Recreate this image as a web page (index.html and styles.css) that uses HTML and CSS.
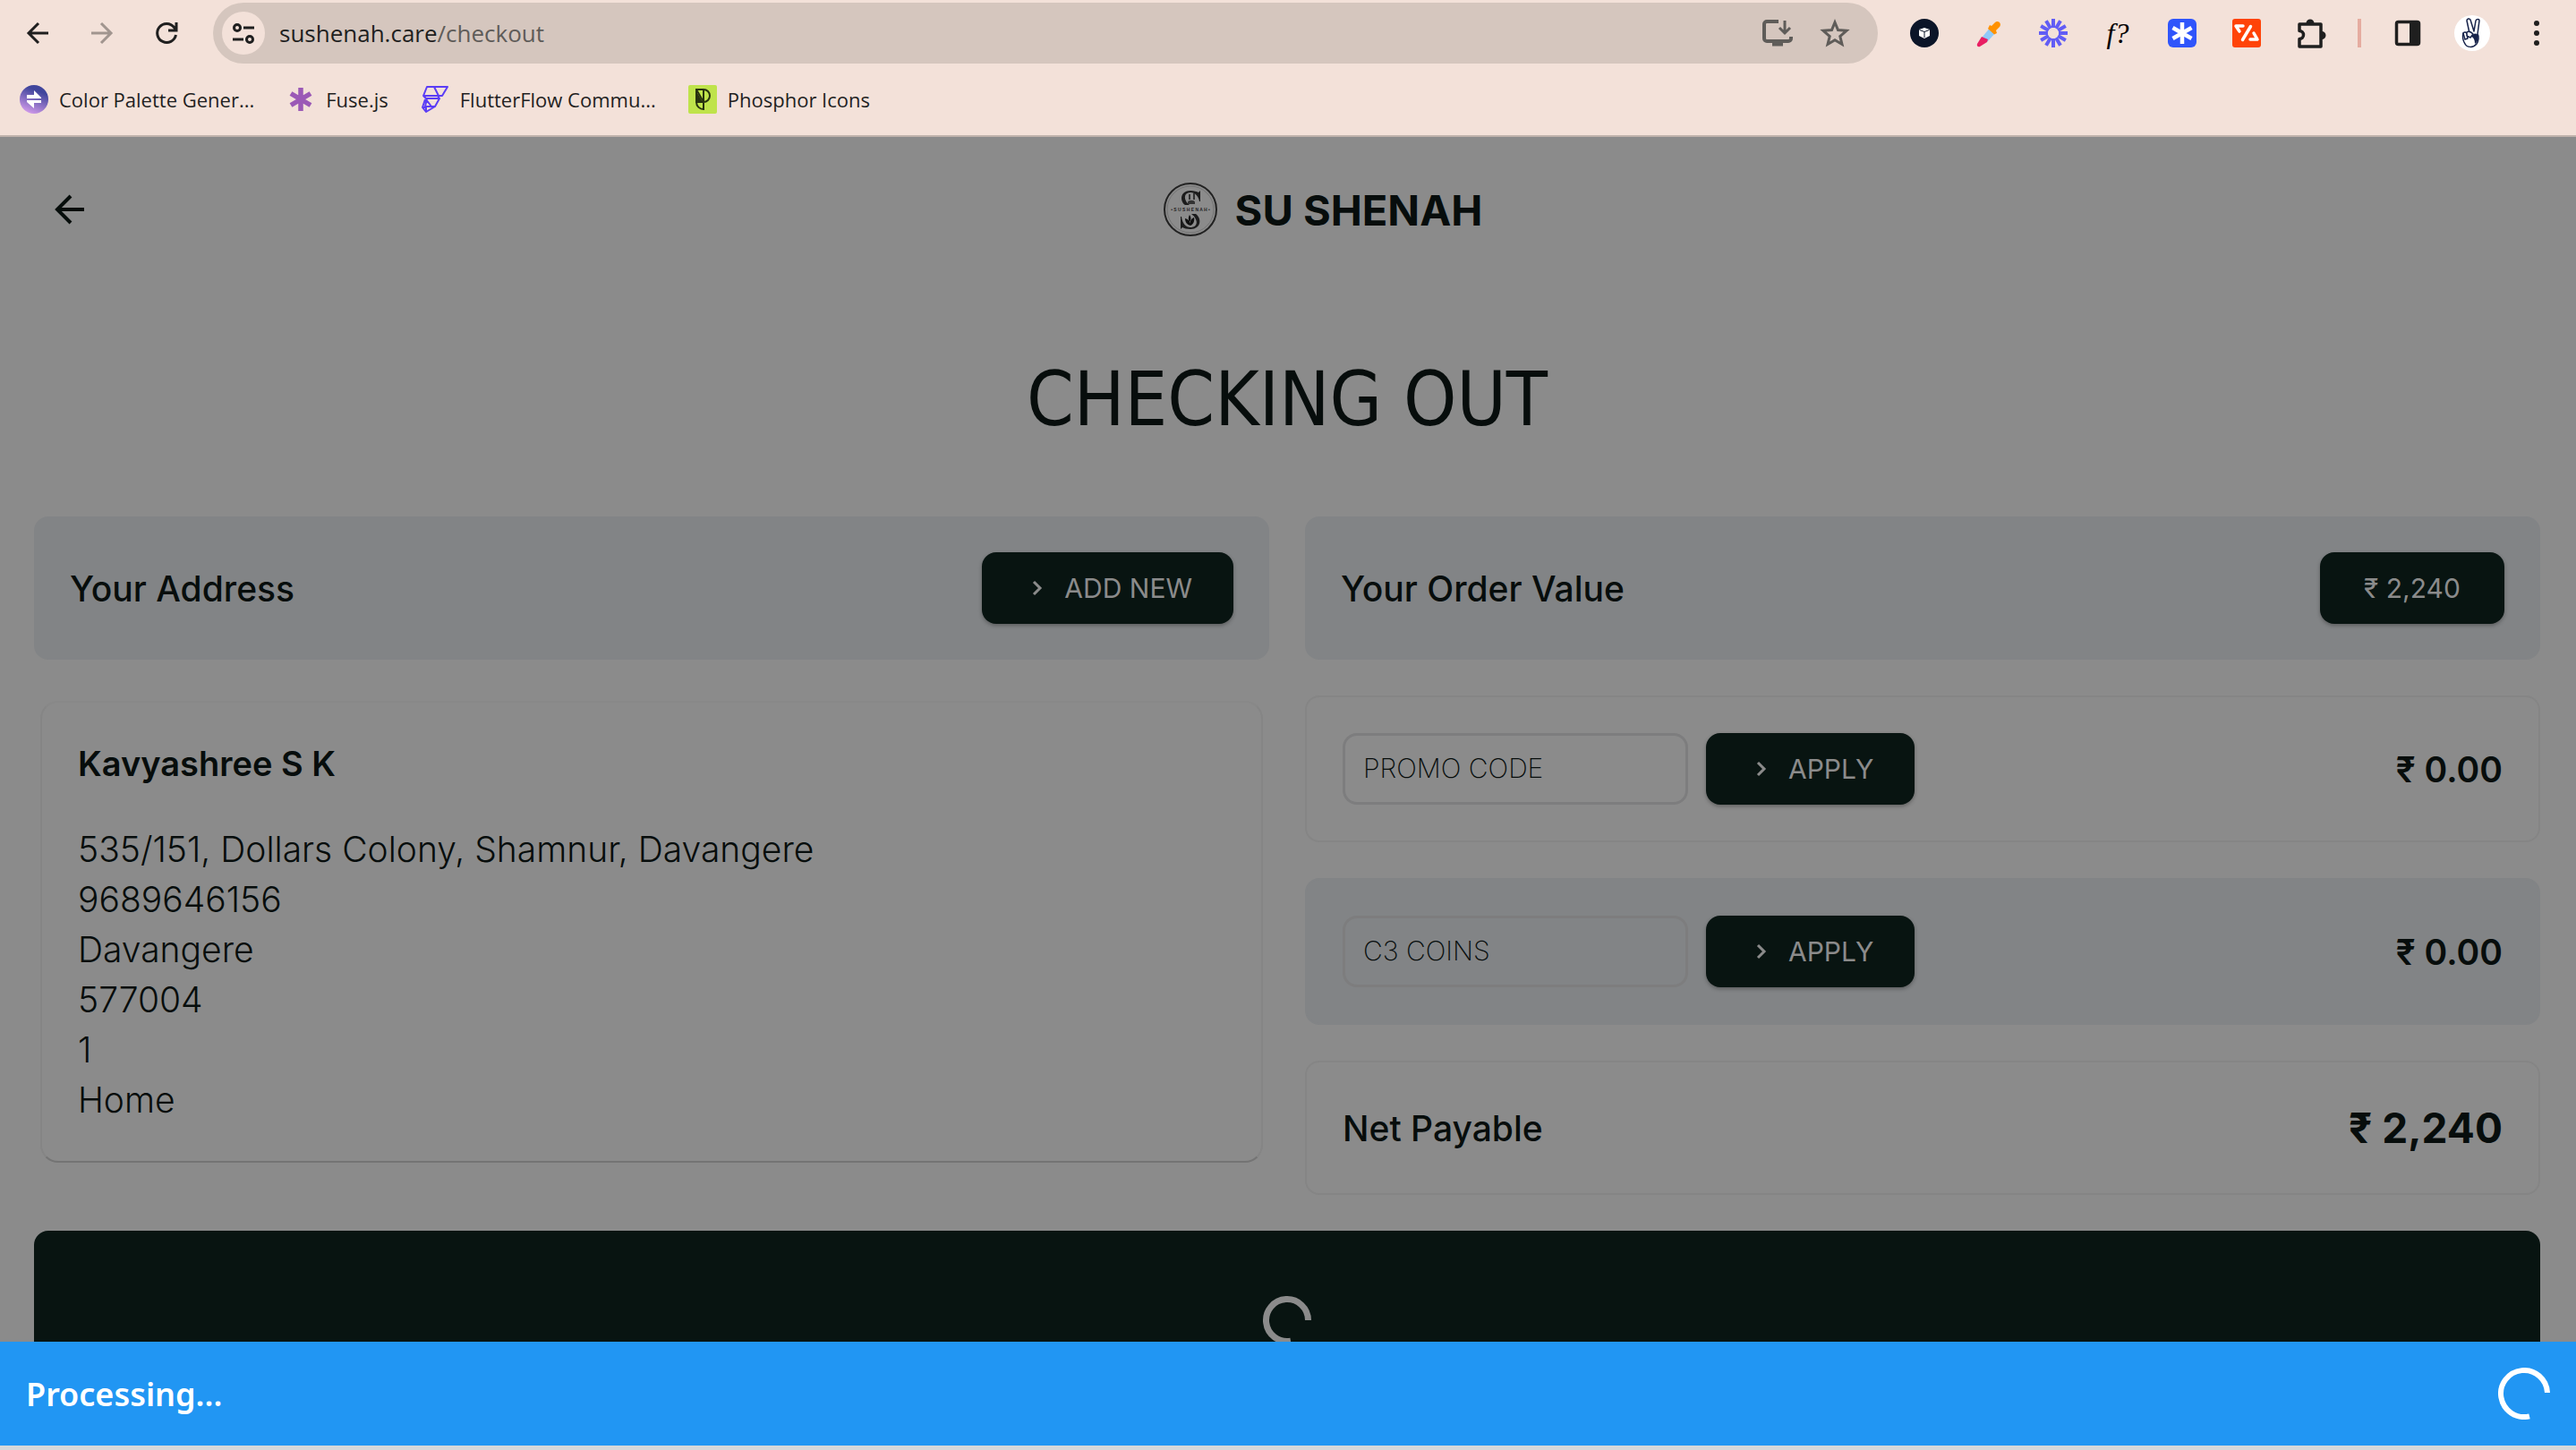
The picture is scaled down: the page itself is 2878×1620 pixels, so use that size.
FILE: index.html
```html
<!DOCTYPE html>
<html lang="en">
<head>
<meta charset="utf-8">
<meta name="viewport" content="width=device-width, initial-scale=1">
<title>Su Shenah - Checkout</title>
<link rel="stylesheet" href="styles.css">
</head>
<body>
<header class="browser">
  <div class="toolbar">
    <button class="tool" type="button" aria-label="Back"><svg width="32" height="32" viewBox="0 0 32 32" fill="none" stroke="#1f1f1f" stroke-width="3"><path d="M28 16H6M17 5 6 16l11 11"/></svg></button>
    <button class="tool" type="button" aria-label="Forward"><svg width="32" height="32" viewBox="0 0 32 32" fill="none" stroke="#a1958f" stroke-width="3"><path d="M4 16h22M15 5l11 11-11 11"/></svg></button>
    <button class="tool" type="button" aria-label="Reload"><svg width="32" height="32" viewBox="0 0 32 32" fill="none" stroke="#1f1f1f" stroke-width="3"><path d="M26.500 18A10.500 10.500 0 1 1 24.500 9.500L27 12.500M27 4v9h-9"/></svg></button>
    <div class="omnibox">
      <button class="site-info" type="button" aria-label="Site information"><svg width="28" height="28" viewBox="0 0 28 28" fill="none" stroke="#1f1f1f" stroke-width="3"><circle cx="7" cy="8" r="3.500"/><path d="M14 8h12M2 21h12"/><circle cx="21" cy="21" r="3.500"/></svg></button>
      <div class="url">sushenah.care<span class="url-path">/checkout</span></div>
      <button class="tool" type="button" aria-label="Install app"><svg width="36" height="36" viewBox="0 0 36 36" fill="none" stroke="#5f5c59" stroke-width="4"><path d="M19 5H6a3 3 0 0 0-3 3v16a3 3 0 0 0 3 3h24a3 3 0 0 0 3-3v-2"/><path d="M26 4v13M20 12l6 6 6-6" stroke-width="3"/><path d="M12 30h12" stroke-width="5"/></svg></button>
      <button class="tool" type="button" aria-label="Bookmark this page"><svg width="36" height="36" viewBox="0 0 36 36" fill="none" stroke="#5f5c59" stroke-width="3"><path d="m18 6 3.500 8.500 9.500.8-7.200 6.200 2.200 9L18 25.800 10 30.500l2.200-9L5 15.300l9.500-.8z"/></svg></button>
    </div>
    <button class="tool" type="button" aria-label="Package extension"><svg width="32" height="32" viewBox="0 0 32 32"><circle cx="16" cy="16" r="16" fill="#0b1528"/><path d="M16 10l6 2v7l-6 3-6-3v-7z" fill="#fff"/><path d="m10.500 12.500 5.500 2 5.500-2M16 14.500V21" stroke="#0b1528" fill="none"/></svg></button>
    <button class="tool" type="button" aria-label="Color picker"><svg width="32" height="32" viewBox="0 0 32 32"><path d="m18 9 6 6-10 11H8l1-6z" fill="#90caf9"/><path d="m8 20 7 3-1 3-8 5c-2 1-4-1-3-3z" fill="#e91e63"/><path d="m17 7 2 1 4-4c3-3 8 1 5 5l-4 4 1 3-3 1.500-7-6.500z" fill="#ff9100"/></svg></button>
    <button class="tool" type="button" aria-label="Loom"><svg width="32" height="32" viewBox="0 0 32 32" stroke="#625df5" stroke-width="4"><g id="ray"><path d="M16 0v10M16 22v10"/></g><use href="#ray" transform="rotate(30 16 16)"/><use href="#ray" transform="rotate(60 16 16)"/><use href="#ray" transform="rotate(90 16 16)"/><use href="#ray" transform="rotate(120 16 16)"/><use href="#ray" transform="rotate(150 16 16)"/></svg></button>
    <button class="tool fonts-ext" type="button" aria-label="Font finder">f?</button>
    <button class="tool" type="button" aria-label="Asterisk extension"><svg width="32" height="32" viewBox="0 0 32 32"><rect width="32" height="32" rx="6" fill="#2f55fb"/><path d="M16 4v24M5.500 10l21 12M26.500 10l-21 12" stroke="#fff" stroke-width="4.500"/></svg></button>
    <button class="tool" type="button" aria-label="Code extension"><svg width="32" height="32" viewBox="0 0 32 32"><rect width="32" height="32" rx="3" fill="#ff4308"/><path d="M12 8H4l4 6M20.500 8.500l-9 15M24 16l4 7h-8" fill="none" stroke="#fff" stroke-width="3.500" stroke-linecap="round" stroke-linejoin="round"/></svg></button>
    <button class="tool" type="button" aria-label="Extensions"><svg width="36" height="36" viewBox="0 0 36 36"><path d="M5 8h24v25H5v-8.500a4.500 4.500 0 0 0 0-9z" fill="none" stroke="#1f1f1f" stroke-width="3.500" stroke-linejoin="round"/><path d="M12.500 7a4.500 4.500 0 0 1 9 0zM30 16a4.500 4.500 0 0 1 0 9z" fill="#1f1f1f"/></svg></button>
    <span class="tool-divider"></span>
    <button class="tool" type="button" aria-label="Side panel"><svg width="32" height="32" viewBox="0 0 32 32"><rect x="3.500" y="3.500" width="25" height="25" rx="2" fill="none" stroke="#1f1f1f" stroke-width="3.500"/><path d="M18 3h10v26H18z" fill="#1f1f1f"/></svg></button>
    <button class="tool" type="button" aria-label="Profile"><svg width="40" height="40" viewBox="0 0 40 40"><circle cx="20" cy="20" r="20" fill="#fff"/><g fill="#fff" stroke="#17234a" stroke-width="1.500" stroke-linejoin="round"><path d="M17 20 14 6c0-2 3-3 4-1l4 13 2-12c1-2 4-2 4 0l-2 15c2 3 1 8-1 11-4 5-11 4-13 0-2-3-3-8-2-12z"/><path d="M10 20c1-2 4-1 4 1l1 5-3 1zM14 19c2-2 5 0 7 2l-3 4-4-2z"/></g><path d="M19 24c2-4 6-5 8-1 0 5-2 8-4 9 0-4-1-7-4-8z" fill="#17234a"/></svg></button>
    <button class="tool" type="button" aria-label="Browser menu"><svg width="32" height="32" viewBox="0 0 32 32" fill="#1f1f1f"><circle cx="16" cy="5" r="3"/><circle cx="16" cy="16" r="3"/><circle cx="16" cy="27" r="3"/></svg></button>
  </div>
  <nav class="bookmarks" aria-label="Bookmarks">
    <a class="bookmark" href="#"><svg width="32" height="32" viewBox="0 0 32 32"><defs><linearGradient id="palette" x1=".7" y1="0" x2=".3" y2="1"><stop offset=".2" stop-color="#40459c"/><stop offset="1" stop-color="#d49cec"/></linearGradient></defs><circle cx="16" cy="16" r="16" fill="url(#palette)"/><path d="M8 11h8V6l8 8v1H8zM24 20h-8v6l-8-7v-2h16z" fill="#fff"/></svg>Color Palette Gener...</a>
    <a class="bookmark" href="#"><svg width="32" height="32" viewBox="0 0 32 32" stroke="#9b59b6" stroke-width="5.500"><path d="M16 3v26M5 9.500l22 13M27 9.500l-22 13"/></svg>Fuse.js</a>
    <a class="bookmark" href="#"><svg width="32" height="32" viewBox="0 0 32 32" fill="none" stroke="#5b3df5" stroke-width="2" stroke-linejoin="round"><path d="M7 2h23l-6 10H3zM15 2l5 10M3 12l3 3h15l-5 9H5l2-9M21 15l-2-3M5 16l-3 9 4 5 10-6M6 16l6 8M2 25h4v5"/></svg>FlutterFlow Commu...</a>
    <a class="bookmark" href="#"><svg width="32" height="32" viewBox="0 0 32 32"><rect width="32" height="32" rx="2" fill="#bfe34b"/><path d="M9 5h8a7 7 0 0 1 0 14H9zM9 5l8 14v8c-4 0-8-3-8-8M17 5v14" fill="none" stroke="#28320f" stroke-width="2"/><path d="M9 7l7 12H9z" fill="#28320f"/></svg>Phosphor Icons</a>
  </nav>
</header>

<main class="page">
  <div class="site-header">
    <button class="back" type="button" aria-label="Go back"><svg width="40" height="40" viewBox="0 0 40 40" fill="none" stroke="#060d0b" stroke-width="4"><path d="M36 20H7M21 5 6 20l15 15"/></svg></button>
    <div class="brand">
      <svg width="60" height="60" viewBox="0 0 60 60" aria-hidden="true">
        <circle cx="30" cy="30" r="29" fill="none" stroke="#222" stroke-width="2"/>
        <circle cx="30" cy="30" r="26" fill="none" stroke="#747474"/>
        <path d="M24 25c-6-4-6-16 6-16 4 0 7 1 9 2l2-2v12h-1c-1-6-5-10-10-10-8 0-8 9-1 14z" fill="#1c1c1c"/>
        <path d="M28 13v6h2v-6zM33 12v7h2v-7zM27 22c0-3 8-3 8 0v2h-8z" fill="#333"/>
        <path d="M36 35c7 5 6 17-6 17-4 0-7-1-9-2l-2 2V38h1c1 8 5 12 10 12 9 0 9-9 1-15z" fill="#1c1c1c"/>
        <path d="M30 48c-4-1-6-4-6-8 4 1 6 4 6 8zM30 48c-1-5 1-8 4-9 1 4-1 8-4 9zM29 44c-2-3-1-6 0-8 2 3 2 5 0 8z" fill="#111"/>
        <text class="logo-name" x="30" y="32" text-anchor="middle">• S U S H E N A H •</text>
      </svg>
      <span class="brand-name">SU SHENAH</span>
    </div>
  </div>

  <h1 class="title">CHECKING OUT</h1>

  <div class="columns">
    <section class="column">
      <div class="heading-card">
        <h2 class="label">Your Address</h2>
        <button class="btn" type="button"><svg width="32" height="32" viewBox="0 0 32 32" fill="none" stroke="#8b8b8b" stroke-width="3"><path d="m12 9 7 7-7 7"/></svg>ADD NEW</button>
      </div>
      <article class="address">
        <h3 class="address-name">Kavyashree S K</h3>
        <div>535/151, Dollars Colony, Shamnur, Davangere</div>
        <div>9689646156</div>
        <div>Davangere</div>
        <div>577004</div>
        <div>1</div>
        <div>Home</div>
      </article>
    </section>

    <section class="column">
      <div class="heading-card">
        <h2 class="label">Your Order Value</h2>
        <button class="btn" type="button">₹ 2,240</button>
      </div>
      <form class="row">
        <input class="field" type="text" placeholder="PROMO CODE" aria-label="Promo code">
        <button class="btn" type="button"><svg width="32" height="32" viewBox="0 0 32 32" fill="none" stroke="#8b8b8b" stroke-width="3"><path d="m12 9 7 7-7 7"/></svg>APPLY</button>
        <span class="amount">₹ 0.00</span>
      </form>
      <form class="row row-tinted">
        <input class="field" type="text" placeholder="C3 COINS" aria-label="C3 coins">
        <button class="btn" type="button"><svg width="32" height="32" viewBox="0 0 32 32" fill="none" stroke="#8b8b8b" stroke-width="3"><path d="m12 9 7 7-7 7"/></svg>APPLY</button>
        <span class="amount">₹ 0.00</span>
      </form>
      <div class="row">
        <h2 class="label">Net Payable</h2>
        <span class="amount total">₹ 2,240</span>
      </div>
    </section>
  </div>

  <button class="pay" type="button" aria-label="Pay now"><svg width="56" height="56" viewBox="0 0 56 56" fill="none" stroke="#8b8b8b" stroke-width="7"><path d="M32 51.200A23.500 23.500 0 1 1 51.500 28"/></svg></button>
</main>

<div class="snackbar" role="status">
  <span>Processing...</span>
  <svg width="58" height="58" viewBox="0 0 58 58" fill="none" stroke="#fff" stroke-width="6"><path d="M35 54.300A26 26 0 1 1 55 28"/></svg>
</div>
</body>
</html>
```
FILE: styles.css
```css
:root {
  --surface: #8b8b8b;
  --tint: #828486;
  --ink: #070d0c;
  --dark: #081411;
  --edge: #858585;
}

* {
  box-sizing: border-box;
}

body {
  margin: 0;
  height: 100vh;
  display: flex;
  flex-direction: column;
  overflow: hidden;
  background: var(--surface);
  color: var(--ink);
  font-family: Inter, "Noto Sans", sans-serif;
}

button {
  border: 0;
  padding: 0;
  background: none;
  font: inherit;
  color: inherit;
}

h1, h2, h3 {
  margin: 0;
}

svg {
  display: block;
  flex: none;
}

/* Browser chrome */
.browser {
  flex: none;
  background: #f3e1d9;
  border-bottom: 2px solid #bfb2ab;
  font-family: "Open Sans", "Noto Sans", sans-serif;
  color: #1f1f1f;
}

.toolbar {
  display: flex;
  align-items: center;
  gap: 24px;
  height: 74px;
  padding: 0 20px 0 18px;
}

.tool {
  display: flex;
  flex: none;
  align-items: center;
  justify-content: center;
  width: 48px;
  height: 48px;
}

.fonts-ext {
  font: italic 32px "Liberation Serif", serif;
  color: #000;
}

.tool-divider {
  width: 4px;
  height: 32px;
  margin: 0 4px;
  background: #e5aca0;
}

.omnibox {
  flex: 1;
  display: flex;
  align-items: center;
  gap: 16px;
  height: 68px;
  margin: 0 4px;
  padding: 0 24px 0 10px;
  border-radius: 34px;
  background: #d5c6be;
}

.site-info {
  display: grid;
  place-items: center;
  width: 48px;
  height: 48px;
  border-radius: 50%;
  background: #f3e1d9;
}

.url {
  flex: 1;
  font-size: 26px;
}

.url-path {
  color: #5f5c59;
}

.bookmarks {
  display: flex;
  gap: 36px;
  height: 77px;
  padding: 0 22px 4px;
}

.bookmark {
  display: flex;
  align-items: center;
  gap: 12px;
  font-size: 22px;
  color: inherit;
  text-decoration: none;
}

/* Checkout page */
.page {
  flex: 1;
  min-height: 0;
  overflow: hidden;
  padding: 0 40px 0 38px;
}

.site-header {
  display: flex;
  align-items: center;
  height: 162px;
}

.back {
  display: grid;
  place-items: center;
  width: 80px;
  height: 80px;
}

.brand {
  flex: 1;
  display: flex;
  align-items: center;
  justify-content: center;
  gap: 20px;
}

.brand-name {
  font-size: 47px;
  font-weight: 700;
}

.logo-name {
  font: 700 5px "Liberation Sans", sans-serif;
  fill: #222;
}

.title {
  padding: 71px 0;
  font: 400 84px/120px "DejaVu Sans Condensed", "DejaVu Sans", sans-serif;
  text-align: center;
}

.columns {
  display: grid;
  grid-template-columns: 1fr 1fr;
  gap: 40px;
}

.column {
  display: flex;
  flex-direction: column;
  gap: 40px;
}

.heading-card {
  display: flex;
  align-items: center;
  justify-content: space-between;
  padding: 40px;
  border-radius: 16px;
  background: var(--tint);
}

.label {
  font-size: 39px;
  font-weight: 500;
}

.btn {
  display: flex;
  align-items: center;
  justify-content: center;
  gap: 14px;
  min-width: 206px;
  height: 80px;
  padding: 0 46px;
  border-radius: 16px;
  background: var(--dark);
  box-shadow: 0 2px 4px rgba(0, 0, 0, 0.3);
  font-size: 30px;
  color: #8b8b8b;
}

.address {
  margin: 6px 7px 0;
  padding: 40px;
  border: 2px solid #858585;
  border-top-color: #888;
  border-bottom-color: #747474;
  border-radius: 20px;
  font-size: 39px;
  font-weight: 300;
  line-height: 56px;
}

.address-name {
  margin-bottom: 40px;
  font-size: 38px;
  font-weight: 600;
}

.row {
  display: flex;
  align-items: center;
  gap: 20px;
  padding: 40px;
  border: 2px solid var(--edge);
  border-radius: 16px;
}

.row-tinted {
  border-color: var(--tint);
  background: var(--tint);
}

.field {
  width: 386px;
  height: 80px;
  padding: 0 20px 2px;
  border: 3px solid #7d7d7e;
  border-radius: 16px;
  background: none;
  font: 200 30px Inter, "Noto Sans", sans-serif;
  color: var(--ink);
}

.field::placeholder {
  color: var(--ink);
  opacity: 1;
}

.amount {
  margin-left: auto;
  font-size: 39px;
  font-weight: 600;
}

.total {
  font-size: 46px;
  font-weight: 700;
  line-height: 66px;
}

.pay {
  display: grid;
  place-items: center;
  width: 100%;
  height: 200px;
  margin-top: 40px;
  border-radius: 16px;
  background: var(--dark);
}

/* Progress message */
.snackbar {
  flex: none;
  display: flex;
  align-items: center;
  justify-content: space-between;
  height: 121px;
  padding: 0 29px;
  border-bottom: 5px solid #d6d8da;
  background: #2196f3;
  font: 600 36px "Noto Sans", sans-serif;
  color: #fff;
}
```
